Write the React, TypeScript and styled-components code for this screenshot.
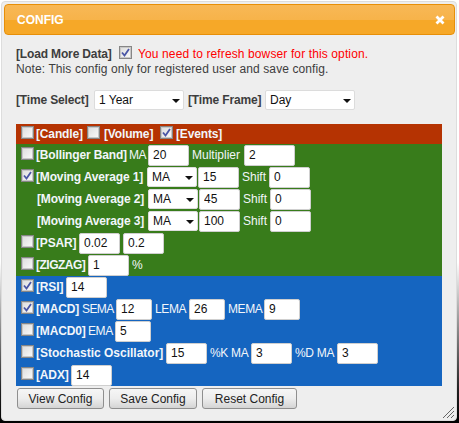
import React from 'react';
import styled, { createGlobalStyle } from 'styled-components';

const Global = createGlobalStyle`
  html, body { margin: 0; padding: 0; }
  body {
    width: 459px;
    height: 423px;
    overflow: hidden;
    background: linear-gradient(#fff 0%, #fff 62%, #222 92%, #000 100%);
    font-family: "Liberation Sans", Arial, sans-serif;
  }
`;

const Dialog = styled.div`
  position: relative;
  box-sizing: border-box;
  width: 456px;
  height: 420px;
  margin: 1px 0 0 1px;
  padding: 2px;
  background: #eeeeee;
  border: 1px solid #ddd;
  border-radius: 4px;
  font-size: 12px;
  color: #3d3d3d;
`;

const Header = styled.div`
  box-sizing: border-box;
  height: 31px;
  width: 451px;
  display: flex;
  align-items: center;
  justify-content: space-between;
  padding: 0 9px 0 12px;
  border: 1px solid #e78f08;
  border-radius: 4px;
  background: linear-gradient(#f8b856 0%, #f7b34a 50%, #f6a828 52%, #f6a828 100%);
  color: #fff;
  font-weight: bold;
  font-size: 12px;
`;

const Body = styled.div`
  padding: 11px 0 0 12px;
`;

const Line = styled.div<{ $h?: number; $mt?: number }>`
  display: flex;
  align-items: center;
  gap: 4px;
  height: ${(p) => p.$h ?? 15}px;
  margin-top: ${(p) => p.$mt ?? 0}px;
  white-space: nowrap;
`;

const Label = styled.b<{ $w?: number; $ls?: number }>`
  flex: none;
  width: ${(p) => (p.$w ? `${p.$w}px` : 'auto')};
  font-weight: bold;
  letter-spacing: ${(p) => p.$ls ?? -0.15}px;
`;

const Caption = styled.span<{ $w: number; $ls?: number }>`
  flex: none;
  width: ${(p) => p.$w}px;
  letter-spacing: ${(p) => p.$ls ?? 0}px;
`;

const Warn = styled.span`
  color: #ff0000;
  margin-left: 2px;
  letter-spacing: 0.12px;
`;

const Note = styled.span`
  letter-spacing: 0.1px;
`;

const Box = styled.span<{ $ml?: number; $mr?: number }>`
  box-sizing: border-box;
  flex: none;
  width: 13px;
  height: 13px;
  margin: -3px ${(p) => p.$mr ?? -1}px 0 ${(p) => p.$ml ?? 0}px;
  border: 1px solid #868686;
  background: linear-gradient(135deg, #dcdcdc, #fbfbfb);
  box-shadow: inset 0 0 0 1px #c8c8c8;
  display: inline-flex;
  align-items: center;
  justify-content: center;
`;

const Check = ({ on, ml, mr }: { on?: boolean; ml?: number; mr?: number }) => (
  <Box $ml={ml} $mr={mr}>
    {on && (
      <svg width="9" height="9" viewBox="0 0 9 9">
        <path d="M1 4.5 L3.5 7.5 L8 1" fill="none" stroke="#4a56a6" strokeWidth="1.8" />
      </svg>
    )}
  </Box>
);

const SelectWrap = styled.span<{ $w: number; $inline?: boolean }>`
  position: relative;
  box-sizing: border-box;
  flex: none;
  display: inline-block;
  width: ${(p) => p.$w}px;
  height: 20px;
  margin: ${(p) => (p.$inline ? '0 -2px 0 1px' : '0')};
  &::after {
    content: '';
    position: absolute;
    right: 4px;
    top: 9px;
    border-left: 4px solid transparent;
    border-right: 4px solid transparent;
    border-top: 4px solid #111;
    pointer-events: none;
  }
`;

const NativeSelect = styled.select`
  appearance: none;
  box-sizing: border-box;
  width: 100%;
  height: 100%;
  padding: 0 0 0 4px;
  border: 1px solid #dcdcdc;
  border-radius: 2px;
  background: #fff;
  color: #111;
  font: 12px "Liberation Sans", Arial, sans-serif;
`;

const Select = ({ w, value, inline }: { w: number; value: string; inline?: boolean }) => (
  <SelectWrap $w={w} $inline={inline}>
    <NativeSelect value={value} onChange={() => {}}>
      <option>{value}</option>
    </NativeSelect>
  </SelectWrap>
);

const Field = styled.input.attrs({ readOnly: true })<{ $w?: number }>`
  box-sizing: border-box;
  flex: none;
  width: ${(p) => p.$w ?? 41}px;
  height: 21px;
  padding: 0 4px;
  border: 1px solid #cfcfcf;
  border-radius: 2px;
  background: #fff;
  color: #111;
  font: 12px "Liberation Sans", Arial, sans-serif;
  outline: none;
`;

const Panel = styled.div<{ $bg: string }>`
  background: ${(p) => p.$bg};
  color: #f2f6fa;
`;

const Row = styled.div<{ $h?: number; $indent?: boolean }>`
  box-sizing: border-box;
  display: flex;
  align-items: center;
  gap: 3px;
  height: ${(p) => p.$h ?? 22}px;
  padding-left: ${(p) => (p.$indent ? 21 : 5)}px;
  white-space: nowrap;
`;

const Panels = styled.div`
  width: 426px;
  margin-top: 14px;
`;

const Actions = styled.div`
  display: flex;
  gap: 5px;
  padding: 2px 0 0 1px;
`;

const Button = styled.button<{ $w: number }>`
  box-sizing: border-box;
  width: ${(p) => p.$w}px;
  height: 21px;
  padding: 0;
  border: 1px solid #8f8f8f;
  border-radius: 3px;
  background: linear-gradient(#f6f6f6 0%, #ededed 50%, #d4d4d4 100%);
  color: #222;
  font: 12px "Liberation Sans", Arial, sans-serif;
`;

const Grip = styled.svg`
  position: absolute;
  right: 1px;
  bottom: 1px;
`;

export default function App() {
  return (
    <>
      <Global />
      <Dialog>
        <Header>
          <span>CONFIG</span>
          <svg width="10" height="10" viewBox="0 0 10 10">
            <path d="M1.5 1.5 L8.5 8.5 M8.5 1.5 L1.5 8.5" stroke="#fff" strokeWidth="2.8" />
          </svg>
        </Header>
        <Body>
          <Line>
            <Label $w={99}>[Load More Data]</Label>
            <Check on mr={0} />
            <Warn>You need to refresh bowser for this option.</Warn>
          </Line>
          <Line>
            <Note>Note: This config only for registered user and save config.</Note>
          </Line>
          <Line $h={20} $mt={14}>
            <Label $w={74}>[Time Select]</Label>
            <Select w={90} value="1 Year" />
            <Label $w={73}>[Time Frame]</Label>
            <Select w={90} value="Day" />
          </Line>
          <Panels>
            <Panel $bg="#b53302">
              <Row $h={20}>
                <Check />
                <Label $w={46}>[Candle]</Label>
                <Check ml={2} mr={1} />
                <Label $w={48}>[Volume]</Label>
                <Check on ml={5} mr={0} />
                <Label>[Events]</Label>
              </Row>
            </Panel>
            <Panel $bg="#387c1b">
              <Row>
                <Check />
                <Label $w={90}>[Bollinger Band]</Label>
                <Caption $w={16} $ls={-0.6}>MA</Caption>
                <Field value="20" />
                <Caption $w={49}>Multiplier</Caption>
                <Field $w={51} value="2" />
              </Row>
              <Row>
                <Check on />
                <Label $w={107}>[Moving Average 1]</Label>
                <Select w={50} value="MA" inline />
                <Field value="15" />
                <Caption $w={24}>Shift</Caption>
                <Field value="0" />
              </Row>
              <Row $indent>
                <Label $w={107}>[Moving Average 2]</Label>
                <Select w={50} value="MA" inline />
                <Field value="45" />
                <Caption $w={24}>Shift</Caption>
                <Field value="0" />
              </Row>
              <Row $indent>
                <Label $w={107}>[Moving Average 3]</Label>
                <Select w={50} value="MA" inline />
                <Field value="100" />
                <Caption $w={24}>Shift</Caption>
                <Field value="0" />
              </Row>
              <Row>
                <Check />
                <Label $w={40}>[PSAR]</Label>
                <Field value="0.02" />
                <Field value="0.2" />
              </Row>
              <Row>
                <Check />
                <Label $w={49} $ls={-0.5}>[ZIGZAG]</Label>
                <Field value="1" />
                <span>%</span>
              </Row>
            </Panel>
            <Panel $bg="#1565c0">
              <Row>
                <Check on />
                <Label $w={27}>[RSI]</Label>
                <Field value="14" />
              </Row>
              <Row>
                <Check on />
                <Label $w={43}>[MACD]</Label>
                <Caption $w={31} $ls={-0.6}>SEMA</Caption>
                <Field $w={36} value="12" />
                <Caption $w={31} $ls={-0.4}>LEMA</Caption>
                <Field $w={36} value="26" />
                <Caption $w={33} $ls={-0.4}>MEMA</Caption>
                <Field $w={36} value="9" />
              </Row>
              <Row>
                <Check />
                <Label $w={49}>[MACD0]</Label>
                <Caption $w={24} $ls={-0.4}>EMA</Caption>
                <Field $w={36} value="5" />
              </Row>
              <Row>
                <Check />
                <Label $w={127} $ls={0}>[Stochastic Oscillator]</Label>
                <Field value="15" />
                <Caption $w={38} $ls={-0.3}>%K MA</Caption>
                <Field value="3" />
                <Caption $w={39} $ls={-0.3}>%D MA</Caption>
                <Field value="3" />
              </Row>
              <Row>
                <Check />
                <Label $w={32}>[ADX]</Label>
                <Field value="14" />
              </Row>
            </Panel>
          </Panels>
          <Actions>
            <Button $w={87}>View Config</Button>
            <Button $w={88}>Save Config</Button>
            <Button $w={95}>Reset Config</Button>
          </Actions>
        </Body>
        <Grip width="13" height="13" viewBox="0 0 13 13">
          <path d="M1 12 L12 1 M5 12 L12 5 M9 12 L12 9" stroke="#666" strokeWidth="1" />
        </Grip>
      </Dialog>
    </>
  );
}
